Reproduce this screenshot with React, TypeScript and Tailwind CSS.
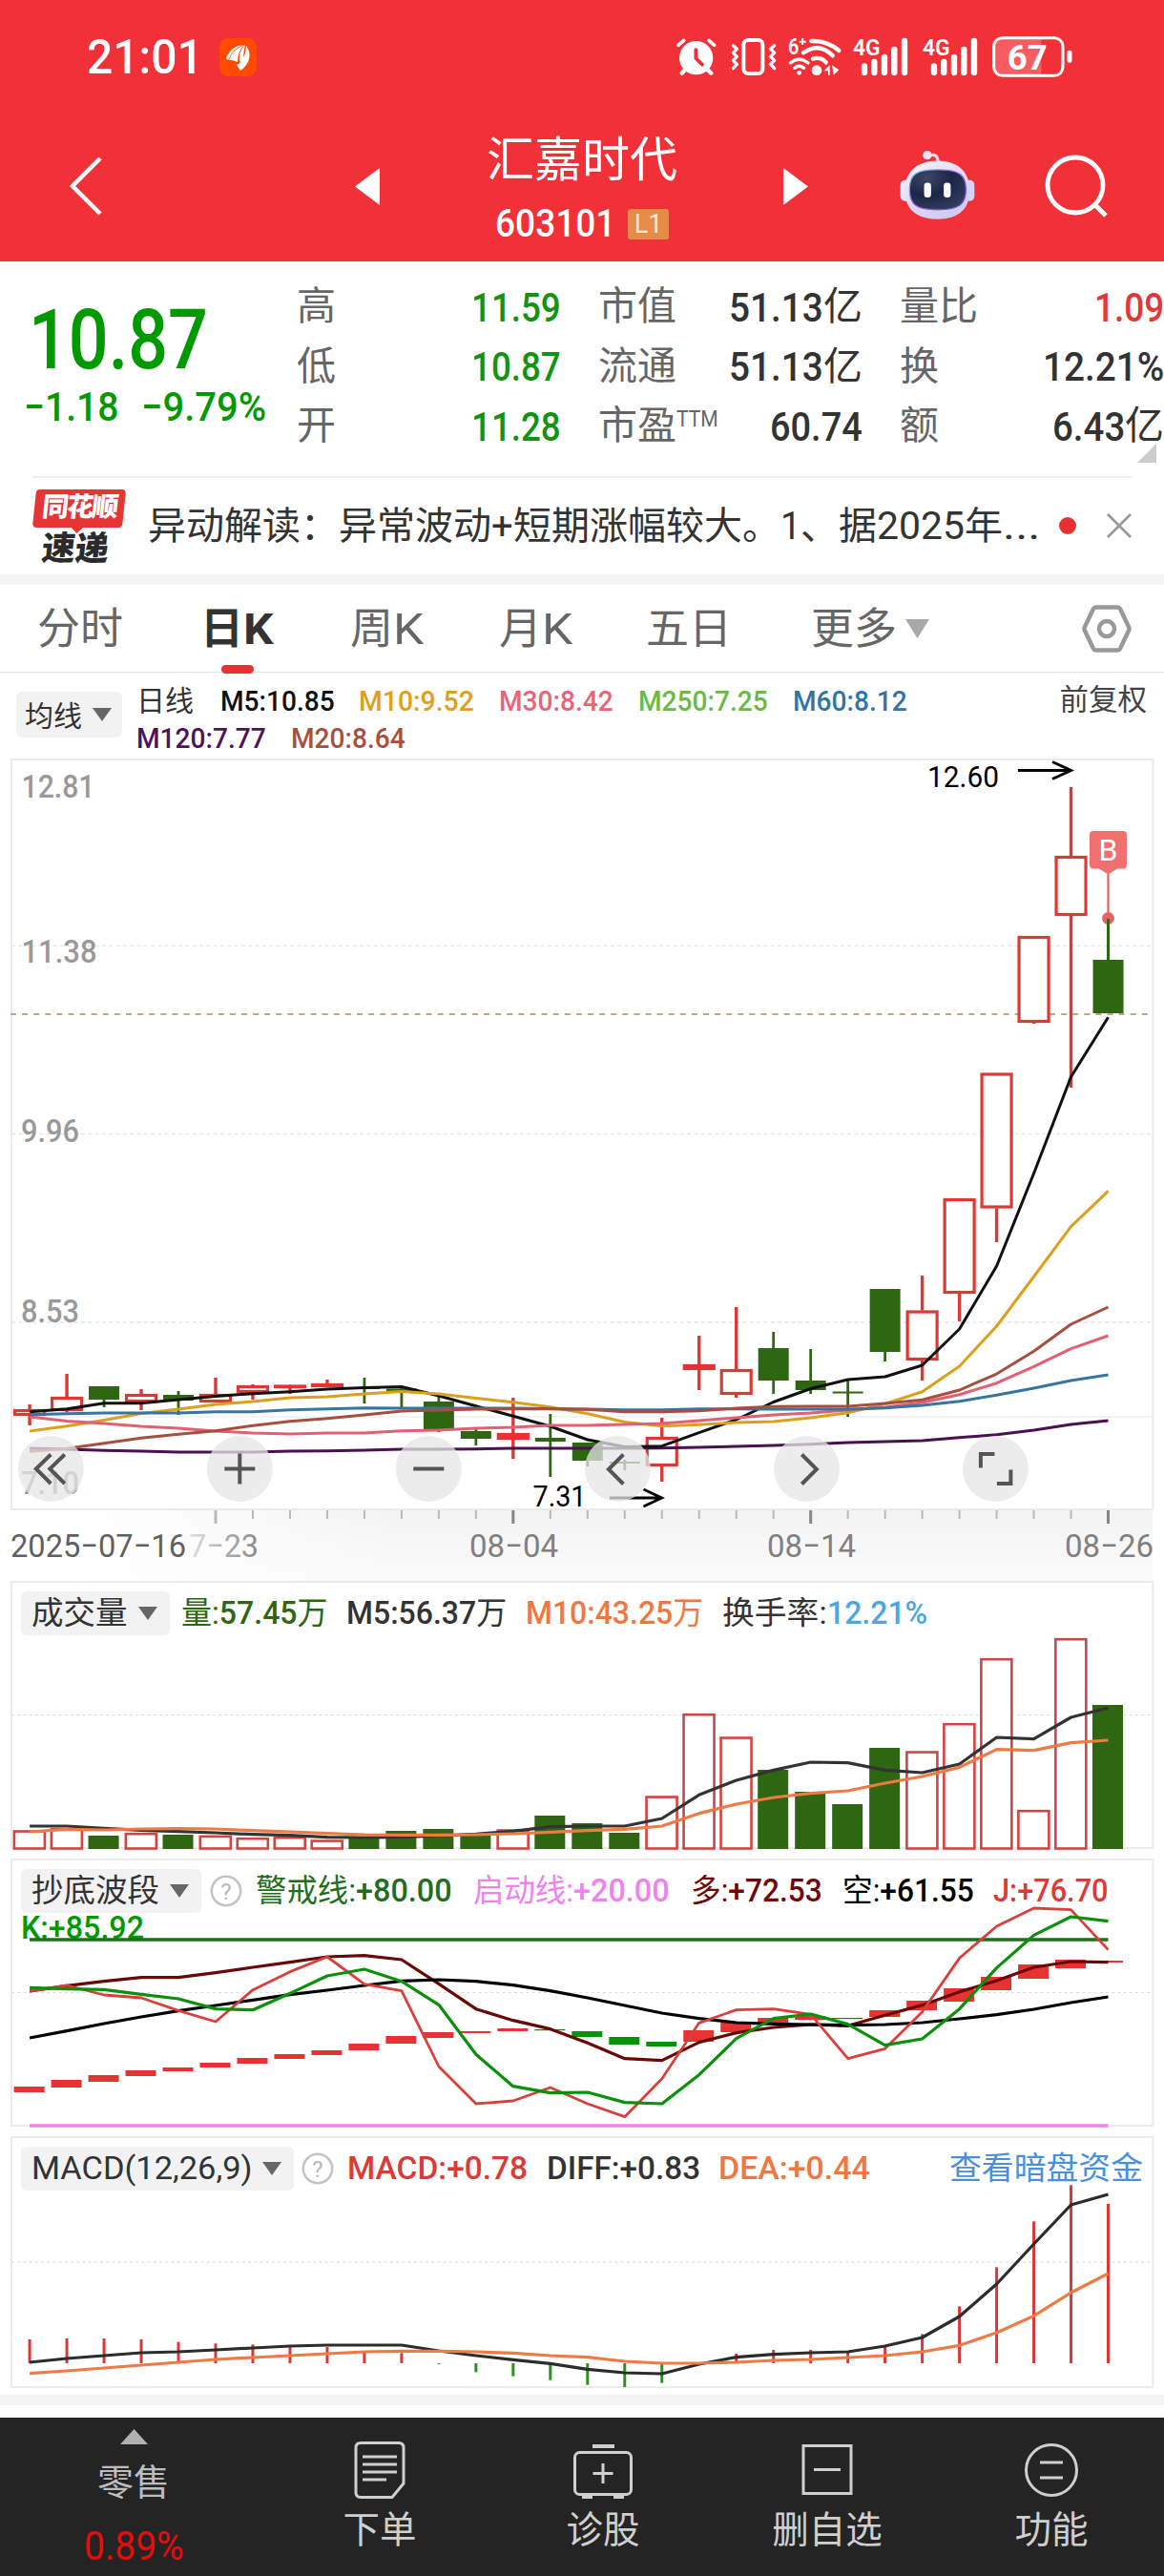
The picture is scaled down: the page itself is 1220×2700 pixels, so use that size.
// 个股日K行情页
import React, { useLayoutEffect, useRef, useState } from 'react'

const RED = '#d93a36'
const RED_FILL = '#e83232'
const GREEN = '#2f6612'

// 第 i 根K线的中心横坐标
const cx = (i: number) => 31.1 + 38.98 * i

interface FitProps {
  w: number
  className?: string
  children: React.ReactNode
}

// 把文字压缩到指定宽度，模拟窄体数字字体
const Fit: React.FC<FitProps> = ({ w, className = '', children }) => {
  const ref = useRef<HTMLSpanElement>(null)
  const [scale, setScale] = useState(1)

  useLayoutEffect(() => {
    if (ref.current && ref.current.offsetWidth > 0) {
      setScale(w / ref.current.offsetWidth)
    }
  }, [w])

  return (
    <span className={`inline-block shrink-0 ${className}`} style={{ width: w }}>
      <span
        ref={ref}
        className="inline-block origin-left whitespace-nowrap"
        style={{ transform: `scaleX(${scale})` }}
      >
        {children}
      </span>
    </span>
  )
}

const Down: React.FC<{ className: string }> = ({ className }) => (
  <svg viewBox="0 0 20 14" preserveAspectRatio="none" className={`shrink-0 ${className}`}>
    <path d="M0 0H20L10 14Z" fill="currentColor" />
  </svg>
)

const Help = () => (
  <svg viewBox="0 0 34 34" className="w-[34px] h-[34px] shrink-0">
    <circle cx="17" cy="17" r="15.2" fill="none" stroke="#c4c4c4" strokeWidth="2.5" />
    <text x="17" y="25.500" fontSize="24" textAnchor="middle" fill="#b8b8b8">?</text>
  </svg>
)

const toPoints = (ys: number[]) => ys.map((y, i) => `${cx(i).toFixed(1)},${y}`).join(' ')

const Line: React.FC<{ ys: number[]; color: string; width?: number }> = ({ ys, color, width = 3.2 }) => (
  <polyline points={toPoints(ys)} fill="none" stroke={color} strokeWidth={width} strokeLinejoin="round" />
)

/* ---------- 日K数据（像素坐标） ---------- */

// [颜色, 最高, 实体上沿, 实体下沿, 最低, 是否实心]
type Candle = ['r' | 'g', number, number, number, number, boolean?]

const candles: Candle[] = [
  ['r', 1472, 1477, 1484, 1494],
  ['r', 1440, 1464, 1479, 1480],
  ['g', 1453, 1453, 1467, 1475],
  ['r', 1456, 1461, 1470, 1478],
  ['g', 1458, 1462, 1468, 1483],
  ['r', 1444, 1461, 1470, 1470],
  ['r', 1451, 1452, 1460, 1467],
  ['r', 1451, 1451.5, 1454.5, 1461, true],
  ['r', 1446, 1450, 1454, 1454, true],
  ['g', 1444, 1454, 1456, 1471],
  ['g', 1455, 1455.5, 1458.5, 1475],
  ['g', 1464, 1469, 1498, 1501],
  ['g', 1498, 1500, 1508, 1515],
  ['r', 1465, 1502, 1509, 1529, true],
  ['g', 1482, 1507, 1511, 1548],
  ['g', 1512, 1512, 1531, 1537],
  ['g', 1530, 1532, 1534, 1541],
  ['r', 1486, 1506, 1537, 1553],
  ['r', 1400, 1430, 1436, 1457, true],
  ['r', 1370, 1435, 1462, 1465],
  ['g', 1396, 1413, 1447, 1461],
  ['g', 1414, 1447, 1457, 1461],
  ['g', 1447, 1458.5, 1460.5, 1485],
  ['g', 1351, 1351, 1417, 1427],
  ['r', 1337, 1373.5, 1426, 1447],
  ['r', 1256, 1256, 1356, 1385],
  ['r', 1124.5, 1124.5, 1266.5, 1302],
  ['r', 981, 981, 1072, 1073],
  ['r', 825, 897, 960, 1140],
  ['g', 963, 1006, 1062, 1062],
]

const ma5 = [1479.7, 1476.7, 1470.7, 1470.7, 1467, 1463.5, 1460.7, 1458.7, 1456, 1454.5, 1453.5, 1463, 1473.7, 1484.3, 1495, 1509, 1516.5, 1515.7, 1501.7, 1488, 1469.5, 1455.5, 1446, 1443, 1431, 1393, 1327, 1229.7, 1128.8, 1066.3]
const ma10 = [1500, 1494.7, 1488.5, 1481.5, 1477, 1472, 1469, 1465, 1464, 1461, 1458.5, 1461, 1465.5, 1469.7, 1474.7, 1481.7, 1490.5, 1494.7, 1493.3, 1491, 1490, 1486, 1480.7, 1471.5, 1458.7, 1432, 1390, 1338, 1285.7, 1248.4]
const ma30 = [1485, 1489.5, 1492, 1495, 1497, 1500, 1502, 1503, 1502, 1502, 1499.7, 1499, 1497, 1496, 1494, 1494, 1493, 1492, 1489, 1486, 1483, 1481, 1478, 1475, 1470, 1461.7, 1449.7, 1432.3, 1413.7, 1400]
const ma60 = [1482.7, 1481.7, 1481, 1481, 1481, 1479.7, 1479.7, 1477.7, 1476.7, 1475.7, 1476, 1476, 1476, 1476, 1476.5, 1477, 1477.7, 1477.7, 1476.7, 1476.7, 1477, 1477, 1477, 1475.7, 1473, 1468.7, 1462.3, 1455, 1447, 1441]
const ma120 = [1518, 1519, 1520.3, 1521, 1522, 1522, 1522, 1521, 1520.7, 1520, 1519, 1519, 1518.7, 1518, 1518, 1518, 1518, 1517.7, 1517, 1516, 1515, 1513.7, 1512, 1511, 1510, 1506.7, 1503.7, 1499, 1493, 1489]
const ma20 = [1521.3, 1518.3, 1512.7, 1507.3, 1503.3, 1499.7, 1494.3, 1489.7, 1486.7, 1483, 1479, 1478, 1477, 1476.7, 1476.7, 1477.3, 1479.7, 1479.7, 1478.7, 1476, 1474.3, 1474, 1474, 1471, 1467.3, 1457, 1440, 1416.3, 1388, 1370]

// 成交量柱顶，三倍精度
const volumes: ['r' | 'g', number][] = [
  ['r', 835], ['r', 828], ['g', 852], ['r', 843], ['g', 849], ['r', 851], ['r', 858], ['r', 855], ['r', 865], ['g', 860],
  ['g', 837], ['g', 831], ['g', 851], ['r', 832], ['g', 789], ['g', 813], ['g', 843], ['r', 727], ['r', 468], ['r', 541],
  ['g', 645], ['g', 714], ['g', 753], ['g', 576], ['r', 586], ['r', 498], ['r', 294], ['r', 771], ['r', 231], ['g', 441],
]
const scaled = (base: number, ys: number[]) => ys.map((y) => base + y / 3)

const volM5 = scaled(1640, [822, 822, 829, 835, 839, 843, 848, 851, 857, 858, 857, 852, 847, 838, 824, 822, 822, 798, 724, 678, 646, 621, 623, 646, 654, 627, 543, 548, 480, 450])
const volM10 = scaled(1640, [840, 832, 834, 831, 830, 831, 836, 840, 845, 849, 850, 850, 849, 846, 841, 836, 832, 822, 782, 753, 732, 719, 711, 687, 666, 637, 581, 584, 560, 552])

const waveLong = scaled(1940, [441, 424, 410, 398, 398, 383, 366, 350, 333, 329, 342, 418, 497, 533, 560, 604, 653, 659, 602, 572, 555, 546, 550, 517, 485, 443, 408, 366, 348, 350])
const waveShort = scaled(1940, [588, 566, 543, 522, 503, 486, 469, 452, 438, 423, 409, 405, 410, 422, 440, 462, 486, 510, 527, 540, 544, 546, 548, 546, 540, 528, 515, 498, 477, 459])
const waveJ = scaled(1940, [441, 423, 453, 462, 502, 537, 437, 380, 333, 419, 440, 678, 795, 786, 744, 795, 836, 716, 541, 500, 497, 514, 653, 622, 506, 337, 237, 180, 185, 311])
const waveK = scaled(1940, [430, 434, 436, 451, 465, 497, 500, 448, 393, 372, 410, 484, 640, 740, 761, 759, 791, 795, 704, 590, 527, 513, 545, 611, 591, 497, 368, 265, 207, 221])
const blocks: ['r' | 'g', number, number][] = [
  ['r', 741, 759], ['r', 720, 744], ['r', 705, 726], ['r', 690, 708], ['r', 681, 693], ['r', 666, 681], ['r', 651, 669], ['r', 639, 654], ['r', 627, 642], ['r', 606, 627],
  ['r', 582, 606], ['r', 570, 588], ['r', 567, 573], ['r', 558, 567], ['g', 561, 564], ['g', 567, 585], ['g', 585, 609], ['g', 600, 615], ['r', 564, 600], ['r', 540, 570],
  ['r', 525, 540], ['r', 519, 531], ['g', 525, 528], ['r', 501, 522], ['r', 471, 501], ['r', 432, 474], ['r', 396, 438], ['r', 357, 402], ['r', 342, 369], ['r', 345, 351],
]

const macdBars = scaled(2230, [666, 663, 663, 666, 674, 679, 682, 690, 690, 702, 709, 744, 769, 782, 794, 809, 816, 803, 741, 711, 699, 699, 705, 690, 649, 562, 439, 295, 181, 240])
const diff = scaled(2230, [738, 726, 717, 708, 705, 699, 693, 687, 684, 684, 684, 702, 717, 730, 742, 760, 771, 774, 744, 722, 713, 708, 705, 687, 660, 594, 492, 366, 243, 210])
const dea = scaled(2230, [773, 765, 756, 747, 738, 729, 723, 717, 711, 705, 703, 703, 705, 709, 717, 722, 735, 741, 741, 738, 732, 729, 723, 717, 705, 685, 645, 592, 519, 459])

/* ---------- 顶部 ---------- */

const StatusIcons = () => (
  <svg viewBox="20 -10 1260 180" className="w-[420px] h-[60px] shrink-0" fill="none" stroke="#fff" strokeLinecap="round">
    {/* 闹钟 */}
    <circle cx="88" cy="91" r="53" fill="#fff" stroke="none" />
    <path d="M32 51L49 36M145 51L128 36" strokeWidth="11" />
    <path d="M56 125L43 139M121 125L135 139" strokeWidth="13" />
    <path d="M87 65V92L107 112" stroke="#f03038" strokeWidth="11" strokeLinejoin="round" />
    {/* 振动 */}
    <rect x="237" y="35" width="60" height="105" rx="14" strokeWidth="12" />
    <path d="M204 52L216 63L204 75L216 87L204 99L216 111L204 124M334 52L322 63L334 75L322 87L334 99L322 111L334 124" strokeWidth="10" strokeLinejoin="round" />
    {/* WiFi */}
    <path d="M450 38Q500 36 537 68M425 75Q475 40 517 84M455 94Q480 86 496 105" strokeWidth="13" />
    <path d="M384 107Q412 84 440 107M397 123Q412 111 427 123" strokeWidth="10" />
    <circle cx="412" cy="138" r="7" fill="#fff" stroke="none" />
    <circle cx="467" cy="130" r="16" fill="#fff" stroke="none" />
    <path d="M490 132L508 114V145H503V132ZM515 114L537 129L520 145Z" fill="#fff" stroke="none" />
    <text x="377" y="79" fontSize="70" fontWeight="600" fill="#fff" stroke="none" textLength="34" lengthAdjust="spacingAndGlyphs">6</text>
    <path d="M412 40H433M422.500 29V50" strokeWidth="6" strokeLinecap="butt" />
    {/* 双卡信号 */}
    {[0, 219].map((dx) => (
      <g key={dx} transform={`translate(${dx} 0)`}>
        <text x="581" y="83" fontSize="74" fontWeight="600" fill="#fff" stroke="none" textLength="86" lengthAdjust="spacingAndGlyphs">4G</text>
        <path d="M617 117V137M648 104V137M680 89V137M711 65V137M743 38V137" strokeWidth="19" />
      </g>
    ))}
    {/* 电池 */}
    <path d="M1050 30H1173V146H1050Q1025 146 1025 120V56Q1025 30 1050 30Z" fill="#f65c60" stroke="none" />
    <rect x="1024" y="28" width="217" height="119" rx="27" strokeWidth="9" />
    <path d="M1262 75V99" strokeWidth="15" />
    <text x="1066" y="129" fontSize="112" fontWeight="700" fill="#fff" stroke="none" textLength="126" lengthAdjust="spacingAndGlyphs">67</text>
  </svg>
)

const Robot = () => (
  <svg viewBox="730 378 238 220" className="w-[79px] h-[73px] shrink-0">
    <defs>
      <linearGradient id="shell" x1="0" y1="0" x2="0.6" y2="1">
        <stop offset="0" stopColor="#fdf6fc" />
        <stop offset="0.5" stopColor="#e4dcf6" />
        <stop offset="1" stopColor="#cfcbf3" />
      </linearGradient>
      <linearGradient id="rim" x1="0" y1="0" x2="1" y2="1">
        <stop offset="0" stopColor="#58d0e0" />
        <stop offset="0.5" stopColor="#a050d8" />
        <stop offset="1" stopColor="#5a50e0" />
      </linearGradient>
      <radialGradient id="face" cx="0.3" cy="0.2" r="0.9">
        <stop offset="0" stopColor="#3c4664" />
        <stop offset="0.5" stopColor="#1c2648" />
        <stop offset="1" stopColor="#343d5c" />
      </radialGradient>
    </defs>
    <path d="M822 397Q850 386 851 418" fill="none" stroke="#f6d8e2" strokeWidth="10" />
    <circle cx="817" cy="395" r="14" fill="#f4e2ee" />
    <rect x="732" y="474" width="32" height="66" rx="15" fill="#eee6f8" />
    <rect x="934" y="474" width="32" height="66" rx="15" fill="#dad2f4" />
    <path d="M849 413C915 413 951 450 951 506C951 565 915 597 849 597C783 597 746 565 746 506C746 450 783 413 849 413Z" fill="url(#shell)" />
    <path d="M849 441C915 441 939 455 939 503C939 552 915 567 849 567C783 567 761 552 761 503C761 455 783 441 849 441Z" fill="url(#face)" stroke="url(#rim)" strokeWidth="4" />
    <rect x="807" y="482" width="22" height="47" rx="10" fill="#fff" />
    <rect x="869" y="482" width="22" height="47" rx="10" fill="#fff" />
  </svg>
)

const Header = () => (
  <div className="h-[274px] bg-[#f13038] text-white">
    <div className="h-[128px] flex items-start pl-[91px]">
      <Fit w={122} className="mt-[29px] text-[50px] leading-[62px] font-medium">21:01</Fit>
      <svg viewBox="0 0 39 40" className="ml-[17px] mt-10 w-[39px] h-10">
        <rect width="39" height="40" rx="9" fill="#ff4a00" />
        <path d="M7 21Q12 8 25 7Q15 10 9 23ZM10 23Q14 12 26 7Q19 14 19 25L13 23ZM21 24Q20 13 27 7Q25 14 25 28ZM28 8Q34 16 30 25Q27 31 22 34L18 28Q27 24 28 8Z" fill="#fff" />
      </svg>
      <div className="ml-[437.700px] mt-[26.7px]">
        <StatusIcons />
      </div>
    </div>
    <div className="h-[134px] flex items-center pl-[73px]">
      <svg viewBox="0 0 34 62" className="w-[34px] h-[62px] shrink-0">
        <path d="M32 2L3 31L32 60" fill="none" stroke="#fff" strokeWidth="4.500" />
      </svg>
      <svg viewBox="0 0 26 39" className="ml-[265px] w-[26px] h-[39px] shrink-0">
        <path d="M26 0V39L0 19.500Z" fill="#fff" />
      </svg>
      <div className="ml-28 w-[200px] h-full flex flex-col items-center">
        <div className="mt-[10px] text-[50px] leading-[60px] whitespace-nowrap">汇嘉时代</div>
        <div className="mt-[20px] h-[34px] w-[182px] flex items-center justify-between">
          <Fit w={126} className="text-[40px] leading-[36px] font-medium">603101</Fit>
          <div className="w-[43px] h-8 rounded-[3px] bg-[#e58d48] text-[#fdebd8] text-[27px] leading-[33px] text-center">
            <Fit w={30}>L1</Fit>
          </div>
        </div>
      </div>
      <svg viewBox="0 0 26 39" className="ml-[111px] w-[26px] h-[39px] shrink-0">
        <path d="M0 0V39L26 19.500Z" fill="#fff" />
      </svg>
      <div className="ml-[96px] -mt-1">
        <Robot />
      </div>
      <svg viewBox="0 0 66 66" className="ml-[73px] w-[66px] h-[66px] shrink-0">
        <circle cx="32" cy="32" r="29" fill="none" stroke="#fff" strokeWidth="4.800" />
        <path d="M52 52L64 64" stroke="#fff" strokeWidth="5" />
      </svg>
    </div>
  </div>
)

/* ---------- 报价 ---------- */

const Row: React.FC<{ label: React.ReactNode; children: React.ReactNode; color?: string }> = ({ label, children, color = 'text-[#333]' }) => (
  <div className="h-[62.3px] flex items-center justify-between">
    <span className="text-[41px] text-[#666] whitespace-nowrap">{label}</span>
    <span className={`text-[43px] flex items-center whitespace-nowrap font-medium ${color}`}>{children}</span>
  </div>
)

const Yi = () => <span className="text-[41px] font-normal">亿</span>

const Quote = () => (
  <div className="h-[225px] flex relative">
    <div className="w-[311px] pl-[25px] pt-[29px] text-[#009900]">
      <Fit w={188} className="ml-[5px] text-[87px] leading-[106px] font-medium">10.87</Fit>
      <div className="-mt-[3px] flex gap-[24px] text-[43px] leading-[40px] font-medium">
        <Fit w={99}>−1.18</Fit>
        <Fit w={131}>−9.79%</Fit>
      </div>
    </div>
    <div className="w-[277px] pt-[17px]">
      <Row label="高" color="text-[#129312]"><Fit w={94}>11.59</Fit></Row>
      <Row label="低" color="text-[#129312]"><Fit w={94}>10.87</Fit></Row>
      <Row label="开" color="text-[#129312]"><Fit w={94}>11.28</Fit></Row>
    </div>
    <div className="ml-[39px] w-[277px] pt-[17px]">
      <Row label="市值"><Fit w={99}>51.13</Fit><Yi /></Row>
      <Row label="流通"><Fit w={99}>51.13</Fit><Yi /></Row>
      <Row label={<span className="flex">市盈<Fit w={44} className="text-[24px] leading-[34px] mt-[6px]">TTM</Fit></span>}>
        <Fit w={97}>60.74</Fit>
      </Row>
    </div>
    <div className="ml-[39px] w-[277px] pt-[17px]">
      <Row label="量比" color="text-[#e03838]"><Fit w={73}>1.09</Fit></Row>
      <Row label="换"><Fit w={127}>12.21%</Fit></Row>
      <Row label="额"><Fit w={76}>6.43</Fit><Yi /></Row>
    </div>
    <svg viewBox="0 0 20 20" className="absolute left-[1192px] top-[191px] w-5 h-5">
      <path d="M20 0V20H0Z" fill="#ccc" />
    </svg>
  </div>
)

const News = () => (
  <div className="h-[103px] flex items-center relative">
    <div className="absolute top-0 left-[34px] w-[1152px] h-0.5 bg-[#eeeeee]" />
    <div className="ml-[34px] w-[98px] h-[80px] mt-1">
      <div className="relative w-[94px] h-10 ml-0.5 -skew-x-6 rounded bg-[#e53535] text-white text-[28px] leading-[38px] font-black text-center whitespace-nowrap tracking-[-2px]">
        同花顺
        <div className="absolute left-[40px] top-[39px] w-0 h-0 border-x-[7px] border-x-transparent border-t-[7px] border-t-[#e53535]" />
      </div>
      <div className="ml-[10px] mt-[5px] -skew-x-6 text-[#2b2b2b] text-[35px] leading-[36px] font-black whitespace-nowrap">速递</div>
    </div>
    <div className="ml-[23px] mt-[2px] w-[937px] text-[40px] text-[#333] flex items-center whitespace-nowrap">
      <span>异动解读：异常波动</span>
      <Fit w={23}>+</Fit>
      <span>短期涨幅较大。</span>
      <Fit w={21}>1</Fit>
      <span>、据</span>
      <Fit w={92}>2025</Fit>
      <span>年</span>
      <Fit w={40}>...</Fit>
    </div>
    <div className="ml-[18px] w-[18px] h-[18px] rounded-full bg-[#e83030]" />
    <svg viewBox="0 0 26 26" className="ml-[32px] w-[26px] h-[26px]">
      <path d="M1 1L25 25M25 1L1 25" stroke="#999" strokeWidth="2.800" />
    </svg>
  </div>
)

const Tabs = () => (
  <div className="h-[92px] flex items-center pl-[39px] text-[45px] text-[#666] border-b border-[#e4e4e4] whitespace-nowrap">
    <div className="w-[90px] pt-[3px]">分时</div>
    <div className="relative ml-[81px] w-[76px] pt-[3px] flex text-[#333] font-bold">
      日<Fit w={32}>K</Fit>
      <div className="absolute left-[22px] bottom-[-12px] w-[34px] h-[9px] rounded-full bg-[#e53333]" />
    </div>
    <div className="ml-[81px] w-[77px] pt-[3px] flex">周<Fit w={32}>K</Fit></div>
    <div className="ml-[79px] w-[77px] pt-[3px] flex">月<Fit w={32}>K</Fit></div>
    <div className="ml-[77px] w-[90px] pt-[3px]">五日</div>
    <div className="ml-[83px] w-[90px] pt-[3px]">更多</div>
    <Down className="ml-[9px] w-[25px] h-[20px] text-[#a8a8a8]" />
    <svg viewBox="0 0 52 50" className="ml-[160px] w-[52px] h-[50px]" fill="none" stroke="#999" strokeWidth="4.500">
      <path d="M15 2.500H37Q39 2.500 40 4L49 23Q50 25 49 27L40 46Q39 47.500 37 47.500H15Q13 47.500 12 46L3 27Q2 25 3 23L12 4Q13 2.500 15 2.500Z" />
      <circle cx="26" cy="25" r="8" />
    </svg>
  </div>
)

const Legends = () => (
  <div className="h-[89px] flex text-[30px] leading-[39px] whitespace-nowrap">
    <div className="ml-[17px] mt-5 w-[111px] h-12 rounded-md bg-[#f2f2f2] flex items-center pl-[9px] text-[#333]">
      <span className="text-[30px] pt-0.5">均线</span>
      <Down className="ml-[11px] w-5 h-[14px] text-[#666]" />
    </div>
    <div className="ml-[15px] pt-[10px] flex-1">
      <div className="flex font-medium">
        <span className="text-[#333] w-[60px] font-normal">日线</span>
        <Fit w={120} className="ml-[28px] text-[#111]">M5:10.85</Fit>
        <Fit w={121} className="ml-[25px] text-[#dfa020]">M10:9.52</Fit>
        <Fit w={120} className="ml-[26px] text-[#e8647a]">M30:8.42</Fit>
        <Fit w={136} className="ml-[26px] text-[#6abb45]">M250:7.25</Fit>
        <Fit w={120} className="ml-[26px] text-[#3474a4]">M60:8.12</Fit>
      </div>
      <div className="flex font-medium">
        <Fit w={136} className="text-[#50125a]">M120:7.77</Fit>
        <Fit w={120} className="ml-[26px] text-[#a85040]">M20:8.64</Fit>
      </div>
    </div>
    <div className="pt-[9px] pr-[18px] text-[30.500px] text-[#444]">前复权</div>
  </div>
)

/* ---------- K线主图 ---------- */

const CircleButton: React.FC<{ x: number; children: React.ReactNode }> = ({ x, children }) => (
  <g transform={`translate(${x} 1539.500)`}>
    <circle r="34.500" fill="rgba(229,229,229,0.75)" />
    <g fill="none" stroke="#555" strokeWidth="4">{children}</g>
  </g>
)

const AxisText: React.FC<{ x: number; y: number; w: number; fill?: string; size?: number; weight?: number; children: React.ReactNode }> = ({
  x, y, w, fill = '#999', size = 34, weight = 500, children
}) => (
  <text x={x} y={y} fontSize={size} fontWeight={weight} fill={fill} textLength={w} lengthAdjust="spacingAndGlyphs">{children}</text>
)

const KChart = () => (
  <svg viewBox="0 795 1220 862" className="block w-[1220px] h-[862px]">
    <defs>
      <linearGradient id="axisBg" x1="0" y1="0" x2="0" y2="1">
        <stop offset="0" stopColor="#f3f3f3" />
        <stop offset="1" stopColor="#fafafa" />
      </linearGradient>
      <linearGradient id="axisFade" x1="0" y1="0" x2="1" y2="0">
        <stop offset="0" stopColor="#fff" />
        <stop offset="0.2" stopColor="#fff" />
        <stop offset="1" stopColor="#fff" stopOpacity="0" />
      </linearGradient>
      <linearGradient id="dateFade" gradientUnits="userSpaceOnUse" x1="196" y1="0" x2="270" y2="0">
        <stop offset="0" stopColor="#e4e4e4" />
        <stop offset="0.6" stopColor="#aaa" />
        <stop offset="1" stopColor="#8a8a8a" />
      </linearGradient>
    </defs>
    <rect x="0" y="1583" width="1208" height="74" fill="url(#axisBg)" />
    <rect x="0" y="1583" width="420" height="74" fill="url(#axisFade)" />

    <rect x="12" y="796" width="1196.500" height="786" fill="#fff" stroke="#ebebeb" strokeWidth="2" />
    {[991.5, 1188.5, 1386].map((y) => (
      <path key={y} d={`M12 ${y}H1208`} stroke="#e8e8e8" strokeWidth="1.500" strokeDasharray="4 3.300" />
    ))}
    <path d="M12 1485H1208" stroke="#e8e8e8" strokeWidth="1.200" />
    <path d="M11 1063H1208" stroke="#c0a878" strokeWidth="2" strokeDasharray="6 6.100" />

    <AxisText x={22.5} y={836} w={77}>12.81</AxisText>
    <AxisText x={22.5} y={1009} w={79}>11.38</AxisText>
    <AxisText x={22} y={1197} w={61}>9.96</AxisText>
    <AxisText x={22} y={1386} w={61}>8.53</AxisText>
    <AxisText x={22} y={1566} w={61}>7.10</AxisText>

    {/* K线 */}
    {candles.map(([type, high, top, bottom, low, solid], i) => {
      const x = cx(i)
      if (type === 'g') {
        return (
          <g key={i} fill={GREEN}>
            <rect x={x - 1.4} y={high} width="2.800" height={low - high} />
            <rect x={x - 16} y={top} width="32" height={bottom - top} />
          </g>
        )
      }
      return (
        <g key={i}>
          <path d={`M${x} ${high}V${top}M${x} ${bottom}V${low}`} stroke={RED} strokeWidth="3.400" />
          <rect
            x={x - 15.5}
            y={top + 1.5}
            width="31"
            height={Math.max(bottom - top - 3, 0.5)}
            fill={solid ? RED_FILL : '#fff'}
            stroke={solid ? RED_FILL : RED}
            strokeWidth="3.200"
          />
        </g>
      )
    })}

    {/* 均线 */}
    <Line ys={ma120} color="#4a1050" width={3} />
    <Line ys={ma5} color="#111" width={3} />
    <Line ys={ma10} color="#dc9f1e" width={3} />
    <Line ys={ma30} color="#e26074" width={3} />
    <Line ys={ma60} color="#3674a2" width={3} />
    <Line ys={ma20} color="#a64e40" width={3} />

    <AxisText x={972} y={825} w={75} fill="#000" size={31} weight={400}>12.60</AxisText>
    <path d="M1067 807.500H1123M1103 798.500L1122.500 807.500L1103 816.500" fill="none" stroke="#000" strokeWidth="3" />
    <AxisText x={558.5} y={1579} w={56} fill="#000" size={31} weight={400}>7.31</AxisText>
    <path d="M639 1570H694M674.500 1561L693.500 1570L674.500 1579" fill="none" stroke="#000" strokeWidth="3" />

    {/* 买点标记 */}
    <path d="M1161.500 912V963" stroke="#dd5555" strokeWidth="2" />
    <circle cx="1161.500" cy="962.500" r="6.500" fill="#e86464" />
    <path d="M1161.500 963V1006" stroke={GREEN} strokeWidth="2.800" />
    <path d="M1146 871H1177Q1181 871 1181 875V906Q1181 910.500 1177 910.500H1171L1161.500 916.500L1152 910.500H1146Q1142 910.500 1142 906V875Q1142 871 1146 871Z" fill="#f07070" />
    <text x="1161.500" y="902" fontSize="32" textAnchor="middle" fill="#fff">B</text>

    {/* 操作按钮 */}
    <CircleButton x={53.3}><path d="M0 -15L-15.500 0L0 15.500M14.500 -15L-1 0L14.500 15.500" /></CircleButton>
    <CircleButton x={251.3}><path d="M-16 0H16M0 -16V16" /></CircleButton>
    <CircleButton x={449.3}><path d="M-16 0H16" /></CircleButton>
    <CircleButton x={647.4}><path d="M6 -15L-9.500 0.500L6 16" /></CircleButton>
    <CircleButton x={845.4}><path d="M-5 -15L10.500 0.500L-5 16" /></CircleButton>
    <CircleButton x={1043.4}><path d="M-1 -15.500H-15.500V-1M1.500 15.500H16V1" /></CircleButton>

    {/* 时间轴 */}
    {candles.map((_, i) => {
      if (i < 5) return null
      const major = (i - 5) % 8 === 0
      return (
        <path
          key={i}
          d={`M${cx(i)} 1583V${major ? 1597 : 1592}`}
          stroke={major && i > 5 ? '#858585' : '#b8b8b8'}
          strokeWidth={major ? 3 : 2}
        />
      )
    })}
    <AxisText x={11} y={1632} w={184} fill="#606060" weight={450}>2025−07−16</AxisText>
    <AxisText x={198} y={1632} w={73} fill="url(#dateFade)" weight={450}>7−23</AxisText>
    <AxisText x={492} y={1632} w={93} fill="#808080" weight={450}>08−04</AxisText>
    <AxisText x={804} y={1632} w={93} fill="#808080" weight={450}>08−14</AxisText>
    <AxisText x={1116} y={1632} w={93} fill="#808080" weight={450}>08−26</AxisText>
  </svg>
)

/* ---------- 副图 ---------- */

const Pill: React.FC<{ w: number; children: React.ReactNode }> = ({ w, children }) => (
  <div className="h-[46px] rounded-md bg-[#f2f2f2] text-[#333] font-normal flex items-center justify-between pl-[11px] pr-[13px] shrink-0" style={{ width: w }}>
    {children}
    <Down className="w-5 h-[14px] text-[#666]" />
  </div>
)

const Panel: React.FC<{ legend: React.ReactNode; children: React.ReactNode }> = ({ legend, children }) => (
  <div className="grid">
    <div className="[grid-area:1/1]">{children}</div>
    <div className="[grid-area:1/1] h-[57px] pt-[11px] pl-[22px] flex items-center text-[33.500px] leading-[46px] whitespace-nowrap">
      {legend}
    </div>
  </div>
)

const VolumePanel = () => (
  <Panel
    legend={
      <>
        <Pill w={156}>成交量</Pill>
        <Fit w={154} className="ml-[12px] text-[#2f6612]">量:<b className="font-medium">57.45</b>万</Fit>
        <Fit w={168} className="ml-[19px] text-[#333]"><b className="font-medium">M5:56.37</b>万</Fit>
        <Fit w={186} className="ml-[20px] text-[#f07840]"><b className="font-medium">M10:43.25</b>万</Fit>
        <Fit w={110} className="ml-[20px] text-[#333]">换手率:</Fit>
        <Fit w={105} className="text-[#4aa8e0] font-medium">12.21%</Fit>
      </>
    }
  >
    <svg viewBox="0 1657 1220 291" className="block w-[1220px] h-[291px]">
      <rect x="12" y="1658" width="1196.500" height="279" fill="none" stroke="#ebebeb" strokeWidth="2" />
      <path d="M12 1797.500H1208" stroke="#dcdcdc" strokeWidth="1.200" strokeDasharray="3 3.200" />
      {volumes.map(([type, raw], i) => {
        const top = 1640 + raw / 3
        return type === 'g' ? (
          <rect key={i} x={cx(i) - 16.5} y={top} width="32" height={1938 - top} fill={GREEN} />
        ) : (
          <rect key={i} x={cx(i) - 16.2} y={top + 1.2} width="32" height={1937.5 - top - 1.2} fill="#fff" stroke="#d04444" strokeWidth="2.600" />
        )
      })}
      <Line ys={volM5} color="#333" />
      <Line ys={volM10} color="#ee7a44" />
    </svg>
  </Panel>
)

const WavePanel = () => (
  <Panel
    legend={
      <>
        <Pill w={189}>抄底波段</Pill>
        <div className="ml-[9px]"><Help /></div>
        <Fit w={206} className="ml-[14px] text-[#1e6e1e]">警戒线:<b className="font-medium">+80.00</b></Fit>
        <Fit w={206} className="ml-[22px] text-[#ee82ee]">启动线:<b className="font-medium">+20.00</b></Fit>
        <Fit w={138} className="ml-[22px] text-[#700808]">多:<b className="font-medium">+72.53</b></Fit>
        <Fit w={138} className="ml-[21px] text-black">空:<b className="font-medium">+61.55</b></Fit>
        <Fit w={121} className="ml-[20px] text-[#dc3a36] font-medium">J:+76.70</Fit>
      </>
    }
  >
    <svg viewBox="0 1948 1220 291" className="block w-[1220px] h-[291px]">
      <rect x="12" y="1949" width="1196.500" height="279" fill="none" stroke="#ebebeb" strokeWidth="2" />
      <path d="M12 2088.500H1208" stroke="#dcdcdc" strokeWidth="1.200" strokeDasharray="3 3.200" />
      <text x="22" y="2032" fontSize="33.500" fontWeight="500" fill="#009900" textLength="129" lengthAdjust="spacingAndGlyphs">K:+85.92</text>
      <path d="M31 2033H1161.500" stroke="#1e6e1e" strokeWidth="3.500" />
      <path d="M31 2228H1161.500" stroke="#ee82ee" strokeWidth="3.500" />
      {blocks.map(([type, top, bottom], i) => (
        <rect
          key={i}
          x={cx(i) - 16.5}
          y={1940 + top / 3}
          width="32"
          height={Math.max((bottom - top) / 3, 1.2)}
          fill={type === 'r' ? RED_FILL : '#069306'}
        />
      ))}
      <Line ys={waveLong} color="#6a0808" />
      <Line ys={waveShort} color="#000" />
      <Line ys={waveJ} color="#d8403c" width={2.8} />
      <Line ys={waveK} color="#0a900a" />
    </svg>
  </Panel>
)

const MacdPanel = () => (
  <Panel
    legend={
      <>
        <Pill w={286}><Fit w={231}>MACD(12,26,9)</Fit></Pill>
        <div className="ml-[8px]"><Help /></div>
        <Fit w={189} className="ml-[14px] text-[#dc3a36] font-medium">MACD:+0.78</Fit>
        <Fit w={161} className="ml-[20px] text-[#333] font-medium">DIFF:+0.83</Fit>
        <Fit w={159} className="ml-[19px] text-[#f07840] font-medium">DEA:+0.44</Fit>
        <Fit w={203} className="ml-[83px] text-[#4a8fdc]">查看暗盘资金</Fit>
      </>
    }
  >
    <svg viewBox="0 2239 1220 271" className="block w-[1220px] h-[271px]">
      <rect x="12" y="2240" width="1196.500" height="262" fill="none" stroke="#ebebeb" strokeWidth="2" />
      <path d="M12 2371H1208" stroke="#e4e4e4" strokeWidth="1.500" strokeDasharray="3 3.200" />
      {macdBars.map((y, i) => (
        <path key={i} d={`M${cx(i)} 2477V${y}`} stroke={y > 2477 ? '#2e9020' : '#d83838'} strokeWidth="3" />
      ))}
      <Line ys={diff} color="#2c2c2c" />
      <Line ys={dea} color="#ee7a44" />
    </svg>
  </Panel>
)

/* ---------- 底部导航 ---------- */

const NavItem: React.FC<{ label: string; className: string; children: React.ReactNode }> = ({ label, className, children }) => (
  <div className={`w-[120px] flex flex-col items-center ${className}`}>
    <svg viewBox="0 0 62 62" className="mt-[23px] w-[62px] h-[62px]" fill="none" stroke="#cfcfcf" strokeWidth="3">
      {children}
    </svg>
    <div className="mt-[6px] text-[38.500px] leading-[54px] text-[#cfcfcf] whitespace-nowrap">{label}</div>
  </div>
)

const BottomNav = () => (
  <div className="h-[166px] bg-[#242424] flex">
    <div className="ml-[80px] w-[120px] flex flex-col items-center">
      <svg viewBox="0 0 29 16" className="mt-[12px] w-[29px] h-4">
        <path d="M14.500 0L29 16H0Z" fill="#b0b0b0" />
      </svg>
      <div className="mt-[13px] text-[38px] leading-[54px] text-[#bdbdbd] whitespace-nowrap">零售</div>
      <div className="mt-[15px] text-[42px] leading-[50px] text-[#e40c0c]"><Fit w={105}>0.89%</Fit></div>
    </div>
    <NavItem label="下单" className="ml-[138px]">
      <path d="M11 3.500H51Q56 3.500 56 8.500V46L44 60.500H11Q6 60.500 6 55.500V8.500Q6 3.500 11 3.500Z" />
      <path d="M13 18H49M13 26H49M13 34H49M13 42H38" />
    </NavItem>
    <NavItem label="诊股" className="ml-[114px]">
      <rect x="1.500" y="13.500" width="59" height="44" rx="5" />
      <path d="M20 7H43M9 60H20M42 60H53" strokeWidth="4" />
      <path d="M20.500 35.500H41.500M31 25V46" />
    </NavItem>
    <NavItem label="删自选" className="ml-[115px]">
      <rect x="6" y="6.500" width="50" height="50" />
      <path d="M17 31.500H45" />
    </NavItem>
    <NavItem label="功能" className="ml-[115px]">
      <circle cx="31" cy="32" r="26.500" />
      <path d="M19 24H43M19 40H43" />
    </NavItem>
  </div>
)

export default function App() {
  return (
    <div className="w-[1220px] h-[2700px] bg-white overflow-hidden font-['Roboto','Noto_Sans_CJK_SC',sans-serif]">
      <Header />
      <Quote />
      <News />
      <div className="h-[11px] bg-[#f4f4f4]" />
      <Tabs />
      <Legends />
      <div className="h-px" />
      <KChart />
      <VolumePanel />
      <WavePanel />
      <MacdPanel />
      <div className="h-[11px] bg-[#f4f4f4]" />
      <div className="h-[13px]" />
      <BottomNav />
    </div>
  )
}
